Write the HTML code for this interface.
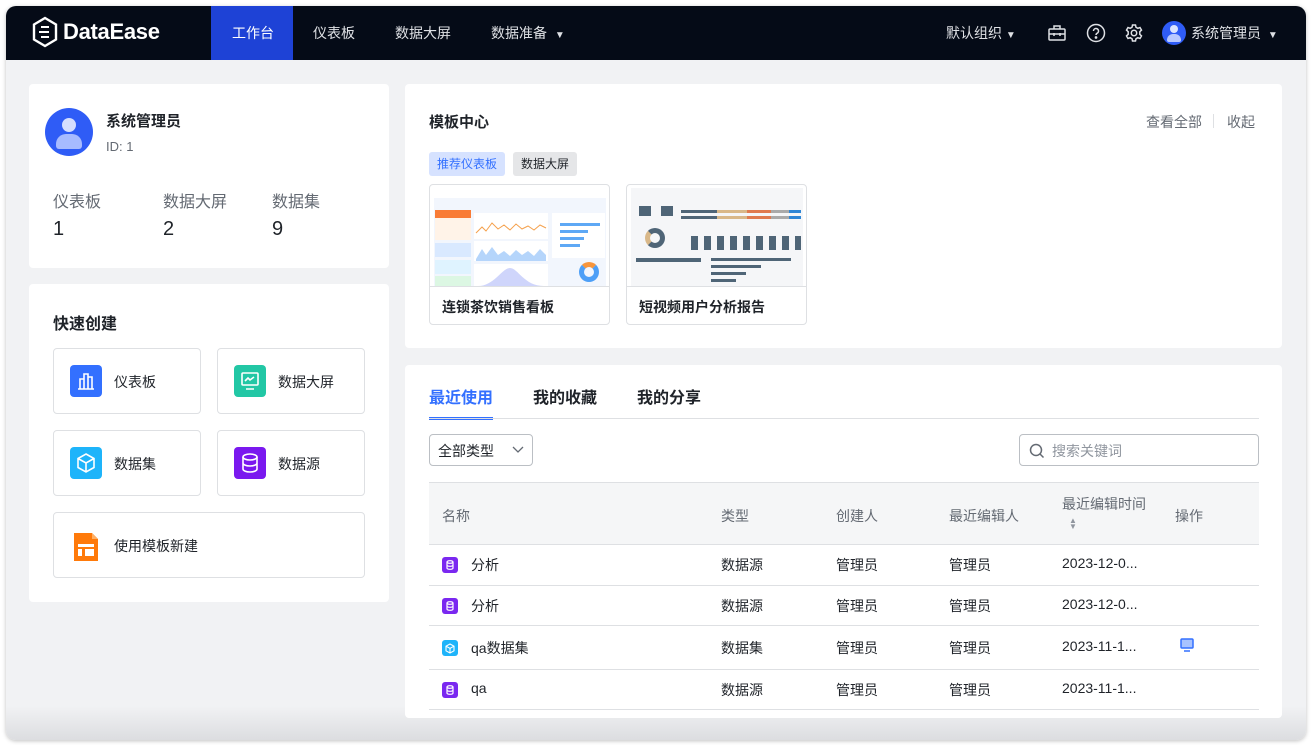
<!DOCTYPE html>
<html><head><meta charset="utf-8">
<style>
*{margin:0;padding:0;box-sizing:border-box}
body{width:1312px;height:745px;background:#fff;font-family:"Liberation Sans","Noto Sans CJK SC",sans-serif;color:#1f2329;position:relative;overflow:hidden}
.win{position:absolute;left:6px;top:6px;width:1300px;height:734px;border-radius:10px;background:linear-gradient(#f1f2f4 0,#f1f2f4 700px,#dcdde0 734px);overflow:hidden;box-shadow:0 1px 4px rgba(0,0,0,.25)}
.hd{position:absolute;left:0;top:0;width:1300px;height:54px;background:#050b17;color:#dfe1e5;font-size:14px}
.a{position:absolute}
.card{position:absolute;background:#fff;border-radius:4px}
.qc{position:absolute;border:1px solid #dee0e3;border-radius:4px;width:148px;height:66px;font-size:14px}
.qc .ic{position:absolute;left:16px;top:16px;width:32px;height:32px;border-radius:4px}
.qc span{position:absolute;left:60px;top:23px}
.th{position:absolute;font-size:14px;color:#646a73}
.row{position:absolute;left:429px;width:830px;border-bottom:1px solid #dee0e3;font-size:14px}
.row div{position:absolute;top:0}
.di{width:16px;height:16px;border-radius:3px;background:#7a28f0;display:inline-block;position:relative}
.di svg{position:absolute;left:0;top:0}
</style></head><body>
<div class="win">
<div class="hd">
 <svg class="a" style="left:25px;top:10px" width="28" height="32" viewBox="0 0 28 32"><path d="M14 2 L25 8.5 V23.5 L14 30 L3 23.5 V8.5 Z" fill="none" stroke="#fff" stroke-width="2.4"/><path d="M10 11h8M8 16h10M10 21h8" stroke="#fff" stroke-width="2"/></svg>
 <div class="a" style="left:57px;top:13px;font-size:22px;font-weight:bold;color:#fff;letter-spacing:-.3px">DataEase</div>
 <div class="a" style="left:205px;top:0;width:82px;height:54px;background:#1e42d6"></div>
 <div class="a" style="left:226px;top:17px;color:#fff">工作台</div>
 <div class="a" style="left:307px;top:17px">仪表板</div>
 <div class="a" style="left:389px;top:17px">数据大屏</div>
 <div class="a" style="left:485px;top:17px">数据准备 <span style="font-size:10px;margin-left:4px">▼</span></div>
 <div class="a" style="left:940px;top:17px">默认组织 <span style="font-size:10px">▼</span></div>
 <svg class="a" style="left:1041px;top:18px" width="20" height="18" viewBox="0 0 20 18" fill="none" stroke="#dfe1e5" stroke-width="1.5"><rect x="2" y="5" width="16" height="11" rx="1"/><path d="M7 5V2h6v3M2 10h16M7 9v3M13 9v3"/></svg>
 <svg class="a" style="left:1080px;top:17px" width="20" height="20" viewBox="0 0 20 20" fill="none" stroke="#dfe1e5" stroke-width="1.5"><circle cx="10" cy="10" r="8.5"/><path d="M7.5 8a2.5 2.5 0 1 1 3.5 2.3c-.7.4-1 .8-1 1.7"/><circle cx="10" cy="14.5" r=".6" fill="#dfe1e5"/></svg>
 <svg class="a" style="left:1118px;top:17px" width="20" height="20" viewBox="0 0 20 20" fill="none" stroke="#dfe1e5" stroke-width="1.5"><path d="M8.5 2h3l.5 2.3 1.8 1 2.2-.8 1.5 2.6-1.7 1.6v2.6l1.7 1.6-1.5 2.6-2.2-.8-1.8 1L11.5 18h-3l-.5-2.3-1.8-1-2.2.8-1.5-2.6 1.7-1.6V8.7L2.5 7.1 4 4.5l2.2.8 1.8-1z"/><circle cx="10" cy="10" r="2.7"/></svg>
 <div class="a" style="left:1156px;top:15px;width:24px;height:24px;border-radius:50%;background:#2f5cf6;overflow:hidden"><div class="a" style="left:8px;top:4px;width:8px;height:8px;border-radius:50%;background:#dbe4ff"></div><div class="a" style="left:5px;top:13px;width:14px;height:8px;border-radius:6px 6px 2px 2px;background:#b9c9ff"></div></div>
 <div class="a" style="left:1185px;top:17px">系统管理员 <span style="font-size:10px;margin-left:3px">▼</span></div>
</div>

<div class="card" style="left:23px;top:78px;width:360px;height:184px">
 <div class="a" style="left:16px;top:24px;width:48px;height:48px;border-radius:50%;background:#2f5cf6;overflow:hidden"><div class="a" style="left:17px;top:10px;width:14px;height:14px;border-radius:50%;background:#d5defe"></div><div class="a" style="left:11px;top:26px;width:26px;height:15px;border-radius:10px 10px 3px 3px;background:#a7bbff"></div></div>
 <div class="a" style="left:77px;top:26px;font-size:15px;font-weight:bold">系统管理员</div>
 <div class="a" style="left:77px;top:55px;font-size:13px;color:#646a73">ID: 1</div>
 <div class="a" style="left:24px;top:104px;font-size:16px;color:#646a73">仪表板</div>
 <div class="a" style="left:134px;top:104px;font-size:16px;color:#646a73">数据大屏</div>
 <div class="a" style="left:243px;top:104px;font-size:16px;color:#646a73">数据集</div>
 <div class="a" style="left:24px;top:134px;font-size:20px">1</div>
 <div class="a" style="left:134px;top:134px;font-size:20px">2</div>
 <div class="a" style="left:243px;top:134px;font-size:20px">9</div>
</div>

<div class="card" style="left:23px;top:278px;width:360px;height:318px">
 <div class="a" style="left:24px;top:26px;font-size:16px;font-weight:bold">快速创建</div>
 <div class="qc" style="left:24px;top:64px"><div class="ic" style="background:#3370ff"><svg width="32" height="32" viewBox="0 0 32 32" fill="none" stroke="#fff" stroke-width="1.6"><path d="M8 24h16M10 24V14h4v10M14 24V9h4v15M18 24V12h4v12"/></svg></div><span>仪表板</span></div>
 <div class="qc" style="left:188px;top:64px"><div class="ic" style="background:#22c7a5"><svg width="32" height="32" viewBox="0 0 32 32" fill="none" stroke="#fff" stroke-width="1.6"><rect x="8" y="8" width="16" height="12" rx="1"/><path d="M11 16l3-3 2 2 4-3M12 24h8"/></svg></div><span>数据大屏</span></div>
 <div class="qc" style="left:24px;top:146px"><div class="ic" style="background:#1eb4fa"><svg width="32" height="32" viewBox="0 0 32 32" fill="none" stroke="#fff" stroke-width="1.6"><path d="M16 7l8 4.5v9L16 25l-8-4.5v-9zM8 11.5l8 4.5 8-4.5M16 16v9"/></svg></div><span>数据集</span></div>
 <div class="qc" style="left:188px;top:146px"><div class="ic" style="background:#7a18ef"><svg width="32" height="32" viewBox="0 0 32 32" fill="none" stroke="#fff" stroke-width="1.6"><ellipse cx="16" cy="10" rx="7" ry="3"/><path d="M9 10v12c0 1.7 3 3 7 3s7-1.3 7-3V10M9 16c0 1.7 3 3 7 3s7-1.3 7-3"/></svg></div><span>数据源</span></div>
 <div class="qc" style="left:24px;top:228px;width:312px"><div class="ic" style="background:none"><svg width="32" height="32" viewBox="0 0 32 32"><path d="M4 4h18l6 6v22H4z" fill="#ff7a0a"/><path d="M22 4v6h6z" fill="#ffb066"/><rect x="8" y="15" width="16" height="3" fill="#fff"/><rect x="8" y="20" width="4" height="7" fill="#fff"/><rect x="15" y="20" width="9" height="7" fill="#fff"/></svg></div><span>使用模板新建</span></div>
</div>

<div class="card" style="left:399px;top:78px;width:877px;height:264px">
 <div class="a" style="left:24px;top:27px;font-size:15px;font-weight:bold">模板中心</div>
 <div class="a" style="left:741px;top:28px;font-size:14px;color:#646a73">查看全部</div>
 <div class="a" style="left:808px;top:30px;width:1px;height:14px;background:#dee0e3"></div>
 <div class="a" style="left:822px;top:28px;font-size:14px;color:#646a73">收起</div>
 <div class="a" style="left:24px;top:68px;width:76px;height:24px;background:#d6e2ff;border-radius:3px;color:#3370ff;font-size:12px;line-height:24px;text-align:center">推荐仪表板</div>
 <div class="a" style="left:108px;top:68px;width:64px;height:24px;background:#e5e6e8;border-radius:3px;color:#1f2329;font-size:12px;line-height:24px;text-align:center">数据大屏</div>
 <div class="a" style="left:24px;top:100px;width:181px;height:141px;border:1px solid #dee0e3;border-radius:4px;overflow:hidden">
  <div class="a" style="left:4px;top:3px;width:172px;height:99px;background:#f2f6fd">
   <div class="a" style="left:0;top:0;width:172px;height:10px;background:#fff"></div>
   <div class="a" style="left:1px;top:22px;width:36px;height:8px;background:#f97c36"></div>
   <div class="a" style="left:1px;top:30px;width:36px;height:22px;background:#fff3e8"></div>
   <div class="a" style="left:1px;top:55px;width:36px;height:14px;background:#d9e9ff"></div>
   <div class="a" style="left:1px;top:72px;width:36px;height:14px;background:#dff3ff"></div>
   <div class="a" style="left:1px;top:88px;width:36px;height:11px;background:#dcf7e3"></div>
   <div class="a" style="left:40px;top:25px;width:74px;height:26px;background:#fff"><svg width="74" height="26"><path d="M2 20 L8 14 12 18 18 10 24 16 30 12 36 17 42 11 48 16 54 13 60 17 66 12 72 15" stroke="#f5a14d" fill="none"/></svg></div>
   <div class="a" style="left:40px;top:53px;width:74px;height:20px;background:#fff"><svg width="74" height="20"><path d="M2 18 L8 8 12 14 18 6 24 14 30 10 36 15 42 9 48 14 54 10 60 15 66 8 72 14V20H2z" fill="#b5d5fb"/></svg></div>
   <div class="a" style="left:40px;top:76px;width:74px;height:23px;background:#fff"><svg width="74" height="23"><path d="M4 22 C20 22 28 4 36 4 C44 4 50 22 70 22z" fill="#cfd5fb"/></svg></div>
   <div class="a" style="left:118px;top:25px;width:53px;height:45px;background:#fff"><div class="a" style="left:8px;top:10px;width:40px;height:3px;background:#5ea8f5"></div><div class="a" style="left:8px;top:17px;width:28px;height:3px;background:#5ea8f5"></div><div class="a" style="left:8px;top:24px;width:24px;height:3px;background:#5ea8f5"></div><div class="a" style="left:8px;top:31px;width:20px;height:3px;background:#5ea8f5"></div></div>
   <div class="a" style="left:145px;top:74px;width:20px;height:20px;border-radius:50%;border:5px solid #4d9ff7;border-top-color:#f7953c"></div>
  </div>
  <div class="a" style="left:0;top:101px;width:181px;border-top:1px solid #dee0e3;height:40px;font-size:14px;font-weight:bold;padding:10px 0 0 12px">连锁茶饮销售看板</div>
 </div>
 <div class="a" style="left:221px;top:100px;width:181px;height:141px;border:1px solid #dee0e3;border-radius:4px;overflow:hidden">
  <div class="a" style="left:4px;top:3px;width:172px;height:99px;background:#f5f6f8">
   <div class="a" style="left:8px;top:18px;width:12px;height:10px;background:#4f6577"></div><div class="a" style="left:30px;top:18px;width:12px;height:10px;background:#4f6577"></div>
   <div class="a" style="left:50px;top:22px;width:120px;height:3px;background:linear-gradient(90deg,#4f6577 30%,#d9b889 30% 55%,#e07a4f 55% 75%,#aaa 75% 90%,#2f86d6 90%)"></div>
   <div class="a" style="left:50px;top:28px;width:120px;height:3px;background:linear-gradient(90deg,#4f6577 30%,#d9b889 30% 55%,#e07a4f 55% 75%,#aaa 75% 90%,#2f86d6 90%)"></div>
   <div class="a" style="left:14px;top:40px;width:20px;height:20px;border-radius:50%;border:5px solid #4f6577;border-left-color:#d9b889"></div>
   <div class="a" style="left:60px;top:48px;width:110px;height:14px;background:repeating-linear-gradient(90deg,#4f6577 0 7px,transparent 7px 13px)"></div>
   <div class="a" style="left:5px;top:70px;width:65px;height:4px;background:#4f6577"></div>
   <div class="a" style="left:80px;top:70px;width:80px;height:3px;background:#4f6577"></div><div class="a" style="left:80px;top:77px;width:50px;height:3px;background:#4f6577"></div><div class="a" style="left:80px;top:84px;width:35px;height:3px;background:#4f6577"></div><div class="a" style="left:80px;top:91px;width:25px;height:3px;background:#4f6577"></div>
  </div>
  <div class="a" style="left:0;top:101px;width:181px;border-top:1px solid #dee0e3;height:40px;font-size:14px;font-weight:bold;padding:10px 0 0 12px">短视频用户分析报告</div>
 </div>
</div>

<div class="card" style="left:399px;top:359px;width:877px;height:353px">
 <div class="a" style="left:24px;top:19px;font-size:16px;color:#3370ff;font-weight:bold">最近使用</div>
 <div class="a" style="left:24px;top:52px;width:64px;height:3px;background:#3370ff"></div>
 <div class="a" style="left:128px;top:19px;font-size:16px;font-weight:bold">我的收藏</div>
 <div class="a" style="left:232px;top:19px;font-size:16px;font-weight:bold">我的分享</div>
 <div class="a" style="left:24px;top:53px;width:830px;height:1px;background:#dee0e3"></div>
 <div class="a" style="left:24px;top:69px;width:104px;height:32px;border:1px solid #bbbfc4;border-radius:4px;font-size:14px;padding:6px 0 0 8px">全部类型<svg class="a" style="left:82px;top:11px" width="12" height="8"><path d="M1 1l5 5 5-5" stroke="#646a73" fill="none" stroke-width="1.3"/></svg></div>
 <div class="a" style="left:614px;top:69px;width:240px;height:32px;border:1px solid #bbbfc4;border-radius:4px;font-size:14px;color:#8f959e;padding:6px 0 0 32px">搜索关键词<svg class="a" style="left:9px;top:8px" width="16" height="16" fill="none" stroke="#646a73" stroke-width="1.5"><circle cx="7" cy="7" r="5.5"/><path d="M11 11l3.5 3.5"/></svg></div>
</div>
<div class="a" style="left:423px;top:476px;width:830px;height:63px;background:#f5f6f7;border-top:1px solid #dee0e3;border-bottom:1px solid #dee0e3"></div>
<div class="th" style="left:436px;top:500px">名称</div>
<div class="th" style="left:715px;top:500px">类型</div>
<div class="th" style="left:830px;top:500px">创建人</div>
<div class="th" style="left:943px;top:500px">最近编辑人</div>
<div class="th" style="left:1056px;top:488px">最近编辑时间</div>
<div class="a" style="left:1063px;top:512px;font-size:8px;color:#8f959e;line-height:6px">▲<br>▼</div>
<div class="th" style="left:1169px;top:500px">操作</div>
</div>

<div class="row" style="top:545px;height:41px"><div style="left:13px;top:12px"><span class="di"><svg width="16" height="16" fill="none" stroke="#fff" stroke-width="1.2"><ellipse cx="8" cy="5" rx="3" ry="1.3"/><path d="M5 5v6c0 .8 1.3 1.3 3 1.3s3-.5 3-1.3V5M5 8c0 .8 1.3 1.3 3 1.3s3-.5 3-1.3"/></svg></span></div><div style="left:42px;top:10px">分析</div><div style="left:292px;top:10px">数据源</div><div style="left:407px;top:10px">管理员</div><div style="left:520px;top:10px">管理员</div><div style="left:633px;top:10px">2023-12-0...</div></div>
<div class="row" style="top:586px;height:40px"><div style="left:13px;top:12px"><span class="di"><svg width="16" height="16" fill="none" stroke="#fff" stroke-width="1.2"><ellipse cx="8" cy="5" rx="3" ry="1.3"/><path d="M5 5v6c0 .8 1.3 1.3 3 1.3s3-.5 3-1.3V5M5 8c0 .8 1.3 1.3 3 1.3s3-.5 3-1.3"/></svg></span></div><div style="left:42px;top:10px">分析</div><div style="left:292px;top:10px">数据源</div><div style="left:407px;top:10px">管理员</div><div style="left:520px;top:10px">管理员</div><div style="left:633px;top:10px">2023-12-0...</div></div>
<div class="row" style="top:626px;height:44px"><div style="left:13px;top:14px"><span class="di" style="background:#1eb4fa"><svg width="16" height="16" fill="none" stroke="#fff" stroke-width="1.1"><path d="M8 4l4 2.2v4.6L8 13l-4-2.2V6.2zM4 6.2l4 2.2 4-2.2M8 8.4V13"/></svg></span></div><div style="left:42px;top:12px">qa数据集</div><div style="left:292px;top:12px">数据集</div><div style="left:407px;top:12px">管理员</div><div style="left:520px;top:12px">管理员</div><div style="left:633px;top:12px">2023-11-1...</div><div style="left:750px;top:11px"><svg width="16" height="16" fill="none" stroke="#3370ff" stroke-width="1.5"><rect x="2" y="2" width="12" height="9" rx="1" fill="#a8c3ff"/><path d="M5 14h6"/></svg></div></div>
<div class="row" style="top:670px;height:40px"><div style="left:13px;top:12px"><span class="di"><svg width="16" height="16" fill="none" stroke="#fff" stroke-width="1.2"><ellipse cx="8" cy="5" rx="3" ry="1.3"/><path d="M5 5v6c0 .8 1.3 1.3 3 1.3s3-.5 3-1.3V5M5 8c0 .8 1.3 1.3 3 1.3s3-.5 3-1.3"/></svg></span></div><div style="left:42px;top:10px">qa</div><div style="left:292px;top:10px">数据源</div><div style="left:407px;top:10px">管理员</div><div style="left:520px;top:10px">管理员</div><div style="left:633px;top:10px">2023-11-1...</div></div>
</body></html>
